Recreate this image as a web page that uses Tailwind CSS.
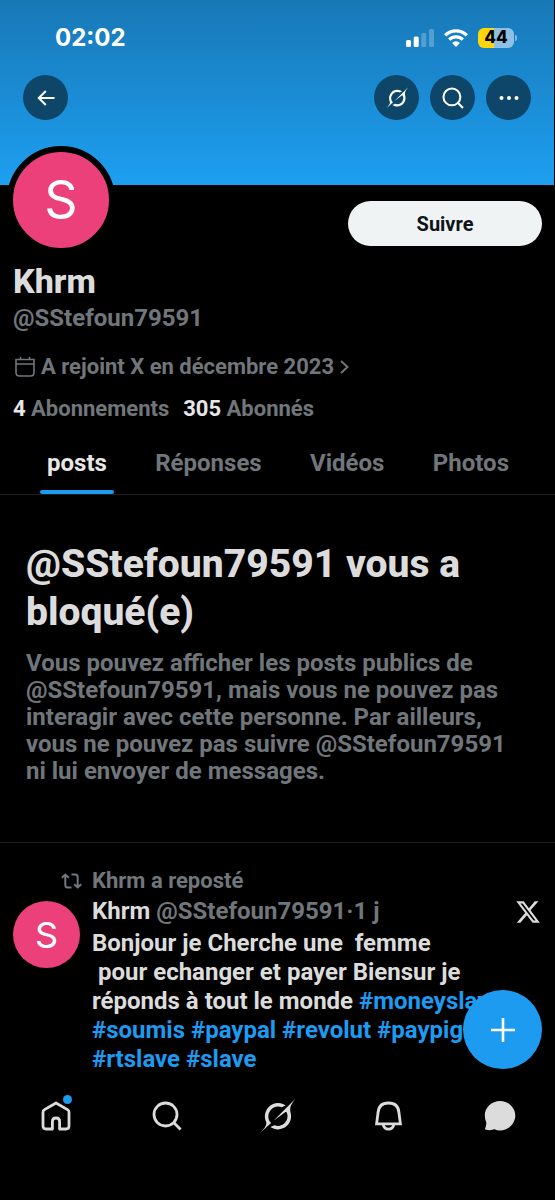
<!DOCTYPE html>
<html lang="fr">
<head>
<meta charset="utf-8">
<meta name="viewport" content="width=device-width, initial-scale=1">
<title>Khrm (@SStefoun79591)</title>
<script src="https://cdn.jsdelivr.net/npm/@tailwindcss/browser@4"></script>
</head>
<body class="bg-black">
<svg class="hidden">
  <symbol id="grok" viewBox="0 0 33 32"><path fill="currentColor" d="M12.745 20.54l10.97-8.19c.539-.4 1.307-.244 1.564.38 1.349 3.288.746 7.241-1.938 9.955-2.683 2.714-6.417 3.31-9.83 1.954l-3.728 1.745c5.347 3.697 11.84 2.782 15.898-1.324 3.219-3.255 4.216-7.692 3.284-11.693l.008.009c-1.351-5.878.332-8.227 3.782-13.031L33 0l-4.54 4.59v-.014L12.743 20.544m-2.263 1.987c-3.837-3.707-3.175-9.446.1-12.755 2.42-2.449 6.388-3.448 9.852-1.979l3.72-1.737c-.67-.49-1.53-1.017-2.515-1.387-4.455-1.854-9.789-.931-13.41 2.728-3.483 3.523-4.579 8.94-2.697 13.561 1.405 3.454-.899 5.898-3.22 8.364C1.49 30.2.666 31.074 0 32l10.478-9.466"/></symbol>
  <symbol id="search" viewBox="0 0 30 30"><g fill="none" stroke="currentColor" stroke-width="2.8"><circle cx="13.5" cy="13.5" r="11.5"/><path d="M21.6 21.6L28.6 28.6"/></g></symbol>
</svg>
<div class="relative flex min-h-screen flex-col overflow-hidden bg-black font-['Roboto',sans-serif] font-bold text-[#dcdcdc]">
  <header class="mr-px h-[185px] bg-linear-to-b from-[#1878b6] to-[#1d9ff1] text-white">
    <div class="flex h-[75px] items-center justify-between pr-[37px] pl-[55px] font-['Inter',sans-serif]">
      <span class="text-2xl">02:02</span>
      <div class="flex items-center gap-[10px]">
        <svg class="h-[18px] w-7" viewBox="0 0 28 18" fill="#fff"><rect y="11" width="5" height="7" rx="1.5"/><rect x="7.7" y="7.5" width="5" height="10.5" rx="1.5"/><rect x="15.3" y="4" width="5" height="14" rx="1.5" opacity=".25"/><rect x="23" width="5" height="18" rx="1.5" opacity=".25"/></svg>
        <svg class="h-[18px] w-6" viewBox="0 0 24 18"><g fill="none" stroke="#fff" stroke-width="3.3"><path d="M1.2 6.4A15.3 15.3 0 0 1 22.8 6.4"/><path d="M5.2 10.6A9.6 9.6 0 0 1 18.8 10.6"/></g><path fill="#fff" d="M12 18L8 13.9Q12 10.8 16 13.9Z"/></svg>
        <div class="flex items-center gap-px">
          <span class="flex h-5 w-9 items-center justify-center rounded-[6px] bg-linear-to-r from-[#ffd60a] from-44% to-[#8dc0e4] to-44% text-[17px] font-extrabold text-black">44</span>
          <span class="h-[6px] w-[2px] rounded-r-full bg-white/45"></span>
        </div>
      </div>
    </div>
    <div class="flex justify-between px-[23px]">
      <button aria-label="Retour" class="flex size-[45px] items-center justify-center rounded-full bg-[#0d4669]"><svg class="h-4 w-[18px]" viewBox="0 0 18 16" fill="none" stroke="#fff" stroke-width="2"><path d="M17.5 8H2M8.8 1L1.8 8L8.8 15"/></svg></button>
      <div class="flex gap-[11px]">
        <button aria-label="Grok" class="flex size-[45px] items-center justify-center rounded-full bg-[#0d4669]"><svg class="size-[22px]"><use href="#grok"/></svg></button>
        <button aria-label="Rechercher" class="flex size-[45px] items-center justify-center rounded-full bg-[#0d4669]"><svg class="size-[22px]"><use href="#search"/></svg></button>
        <button aria-label="Plus" class="flex size-[45px] items-center justify-center rounded-full bg-[#0d4669]"><svg class="h-1 w-5" viewBox="0 0 20 4" fill="#fff"><circle cx="2.500" cy="2" r="2"/><circle cx="10" cy="2" r="2"/><circle cx="17.500" cy="2" r="2"/></svg></button>
      </div>
    </div>
  </header>

  <section class="px-[13px]">
    <div class="flex items-start justify-between pt-4">
      <div class="-mt-[55px] -ml-[6px] flex size-[108px] items-center justify-center rounded-full border-6 border-black bg-[#ec407a] font-['Inter',sans-serif] text-[52px] font-normal text-white">S</div>
      <button class="h-[45px] w-[194px] rounded-full bg-[#eff3f4] text-[20px] text-[#0f1419]">Suivre</button>
    </div>
    <h2 class="mt-[9px] text-[34px] leading-9 font-extrabold">Khrm</h2>
    <p class="mt-[5px] text-[24px] leading-7 text-[#71767b]">@SStefoun79591</p>
    <a href="#" class="mt-[21px] flex items-center text-[22px] leading-7 text-[#71767b]">
      <svg class="mr-[6px] ml-[2px] size-5" viewBox="0 0 20 20" fill="none" stroke="currentColor" stroke-width="1.6"><path d="M1 2.500H19V15.500Q19 19 15.500 19H4.500Q1 19 1 15.500ZM1 7H19M5.500 0V2.500M14.500 0V2.500"/></svg>
      A rejoint X en décembre 2023
      <svg class="ml-[6px] h-[14px] w-[9px]" viewBox="0 0 9 14" fill="none" stroke="currentColor" stroke-width="2"><path d="M1 1L7.500 7L1 13"/></svg>
    </a>
    <p class="mt-[14px] flex gap-[14px] text-[22px] leading-7 text-[#71767b]">
      <a href="#"><span class="text-[#e7e7e7]">4</span> Abonnements</a>
      <a href="#"><span class="text-[#e7e7e7]">305</span> Abonnés</a>
    </p>
  </section>

  <nav class="mt-[9px] flex h-[63px] justify-between border-b border-[#1c1e20] pr-[46px] pl-10 text-[24px] text-[#71767b]">
    <button class="relative -mr-[7px] px-[7px] text-[#e7e7e7]">posts<span class="absolute inset-x-0 bottom-0 h-1 rounded-full bg-[#1d9bf0]"></span></button>
    <button>Réponses</button>
    <button>Vidéos</button>
    <button>Photos</button>
  </nav>

  <section class="border-b border-[#1c1e20] px-[26px] pt-[45px] pb-[57px]">
    <h1 class="text-[39px] leading-[48px] font-extrabold">@SStefoun79591 vous a<br>bloqué(e)</h1>
    <p class="mt-[14px] text-[24px] leading-[27px] whitespace-nowrap text-[#71767b]">Vous pouvez afficher les posts publics de<br>@SStefoun79591, mais vous ne pouvez pas<br>interagir avec cette personne. Par ailleurs,<br>vous ne pouvez pas suivre @SStefoun79591<br>ni lui envoyer de messages.</p>
  </section>

  <article class="px-[13px] pt-6">
    <div class="flex items-center gap-[10px] pl-12 text-[22px] leading-7 text-[#71767b]">
      <svg class="h-4 w-[21px]" viewBox="0 0 21 16" fill="none" stroke="currentColor" stroke-width="2"><path d="M.8 4.8L4.3 1.5L7.8 4.8M4.3 2V12Q4.3 14.5 6.8 14.5H10.5M10.5 1.5H14.2Q16.7 1.5 16.7 4V14M13.2 11.2L16.7 14.5L20.2 11.2"/></svg>
      Khrm a reposté
    </div>
    <div class="flex items-start gap-3 pt-[2px]">
      <div class="mt-1 flex size-[67px] shrink-0 items-center justify-center rounded-full bg-[#ec407a] font-['Inter',sans-serif] text-4xl font-normal text-white">S</div>
      <div class="min-w-0 flex-1 text-[24px] leading-[29px]">
        <div class="flex items-center justify-between">
          <p>Khrm <span class="text-[#71767b]">@SStefoun79591·1 j</span></p>
          <svg class="mr-[2px] size-6" viewBox="1 2 22 20" fill="currentColor"><path d="M18.244 2.25h3.308l-7.227 8.26 8.502 11.24H16.17l-5.214-6.817L4.99 21.75H1.68l7.73-8.835L1.254 2.25H8.08l4.713 6.231zm-1.161 17.52h1.833L7.084 4.126H5.117z"/></svg>
        </div>
        <p class="mt-[3px] whitespace-pre">Bonjour je Cherche une  femme
 pour echanger et payer Biensur je
réponds à tout le monde <a href="#" class="text-[#1d9bf0]">#moneyslave</a>
<a href="#" class="text-[#1d9bf0]">#soumis</a> <a href="#" class="text-[#1d9bf0]">#paypal</a> <a href="#" class="text-[#1d9bf0]">#revolut</a> <a href="#" class="text-[#1d9bf0]">#paypig</a>
<a href="#" class="text-[#1d9bf0]">#rtslave</a> <a href="#" class="text-[#1d9bf0]">#slave</a></p>
      </div>
    </div>
  </article>

  <nav class="relative mt-auto grid h-[124px] grid-cols-5 items-start justify-items-center bg-black pt-6">
    <button aria-label="Nouveau post" class="absolute right-[13px] bottom-full mb-[7px] flex size-[79px] items-center justify-center rounded-full bg-[#1d9bf0]"><svg class="size-6" viewBox="0 0 24 24" stroke="#fff" stroke-width="2.6"><path d="M12 0V24M0 12H24"/></svg></button>
    <a href="#" aria-label="Accueil" class="relative flex size-8 items-center justify-center">
      <svg class="size-[30px]" viewBox="0 0 30 30" fill="none" stroke="currentColor" stroke-width="2.8" stroke-linejoin="round"><path d="M15 2L26.5 8.6Q28 9.5 28 11.2V25Q28 28 25 28H18.6V20.5Q18.6 17 15 17T11.4 20.5V28H5Q2 28 2 25V11.2Q2 9.5 3.5 8.6Z"/></svg>
      <span class="absolute -top-[5px] right-0 size-[9px] rounded-full bg-[#1d9bf0]"></span>
    </a>
    <a href="#" aria-label="Rechercher" class="flex size-8 items-center justify-center"><svg class="size-[30px]"><use href="#search"/></svg></a>
    <a href="#" aria-label="Grok" class="flex size-8 items-center justify-center"><svg class="h-[34px] w-[35px] shrink-0"><use href="#grok"/></svg></a>
    <a href="#" aria-label="Notifications" class="flex size-8 items-center justify-center"><svg class="h-[30px] w-[27px]" viewBox="0 0 27 30" fill="none" stroke="currentColor" stroke-width="2.8"><path d="M13.5 2Q3.6 2 3 12L1.6 22.8H25.4L24 12Q23.4 2 13.5 2ZM8 23Q9 28.2 13.5 28.2T19 23"/></svg></a>
    <a href="#" aria-label="Messages" class="flex size-8 items-center justify-center"><svg class="size-8" viewBox="0 0 32 32" fill="currentColor"><path d="M16 1C24.5 1 31.3 7.500 31.300 15.500S24.500 30.500 16 30.500Q13 30.500 10.500 29.300Q6 31 0.800 29.200Q2.500 26.500 2.300 22.500Q.8 19.500 .8 15.500C.8 7.500 7.500 1 16 1Z"/></svg></a>
  </nav>
</div>
</body>
</html>
